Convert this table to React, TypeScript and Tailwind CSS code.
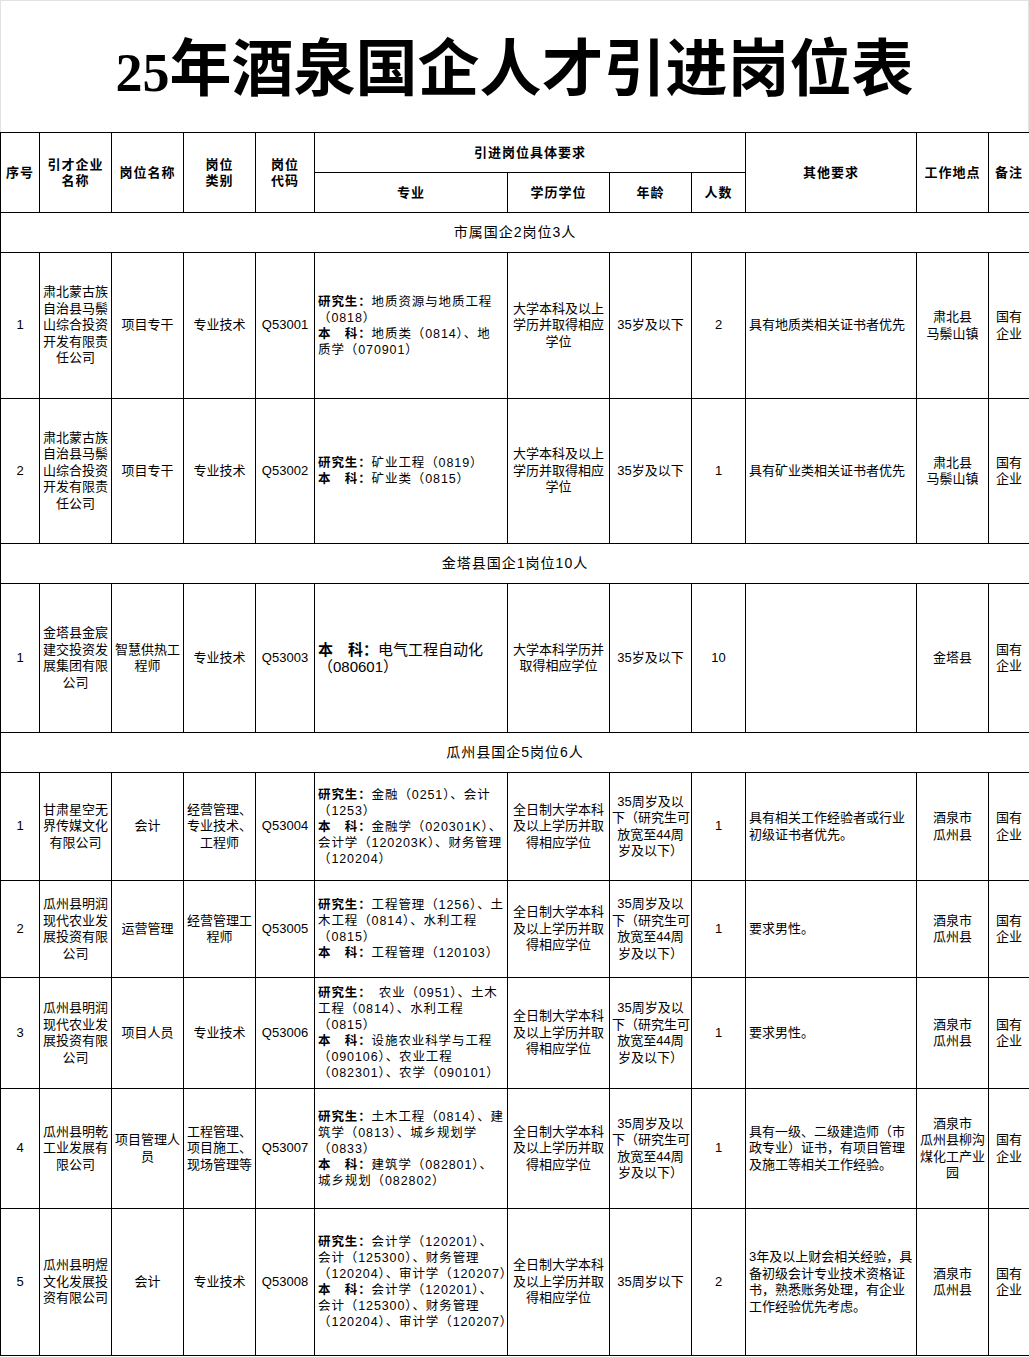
type Major = { b?: string; t: string }

interface Post {
  no: string
  company: string[]
  name: string[]
  kind: string[]
  code: string
  major: Major[]
  big?: boolean
  degree: string[]
  age: string[]
  count: string
  other: string[]
  place: string[]
  note: string[]
  height: string
}

interface Section {
  title: string
  posts: Post[]
}

const GRAD = "研究生："
const UG = "本　科："

const DEGREE_A = ["大学本科及以上", "学历并取得相应", "学位"]
const DEGREE_FULL = ["全日制大学本科", "及以上学历并取", "得相应学位"]
const AGE_44 = ["35周岁及以", "下（研究生可", "放宽至44周", "岁及以下）"]
const SUBEI = ["肃北蒙古族", "自治县马鬃", "山综合投资", "开发有限责", "任公司"]
const MINGRUN = ["瓜州县明润", "现代农业发", "展投资有限", "公司"]
const GUAZHOU = ["酒泉市", "瓜州县"]
const STATE = ["国有", "企业"]

const sections: Section[] = [
  {
    title: "市属国企2岗位3人",
    posts: [
      {
        no: "1",
        company: SUBEI,
        name: ["项目专干"],
        kind: ["专业技术"],
        code: "Q53001",
        major: [
          { b: GRAD, t: "地质资源与地质工程" },
          { t: "（0818）" },
          { b: UG, t: "地质类（0814）、地" },
          { t: "质学（070901）" },
        ],
        degree: DEGREE_A,
        age: ["35岁及以下"],
        count: "2",
        other: ["具有地质类相关证书者优先"],
        place: ["肃北县", "马鬃山镇"],
        note: STATE,
        height: "h-[146px]",
      },
      {
        no: "2",
        company: SUBEI,
        name: ["项目专干"],
        kind: ["专业技术"],
        code: "Q53002",
        major: [
          { b: GRAD, t: "矿业工程（0819）" },
          { b: UG, t: "矿业类（0815）" },
        ],
        degree: DEGREE_A,
        age: ["35岁及以下"],
        count: "1",
        other: ["具有矿业类相关证书者优先"],
        place: ["肃北县", "马鬃山镇"],
        note: STATE,
        height: "h-[145px]",
      },
    ],
  },
  {
    title: "金塔县国企1岗位10人",
    posts: [
      {
        no: "1",
        company: ["金塔县金宸", "建交投资发", "展集团有限", "公司"],
        name: ["智慧供热工", "程师"],
        kind: ["专业技术"],
        code: "Q53003",
        major: [{ b: UG, t: "电气工程自动化" }, { t: "（080601）" }],
        big: true,
        degree: ["大学本科学历并", "取得相应学位"],
        age: ["35岁及以下"],
        count: "10",
        other: [],
        place: ["金塔县"],
        note: STATE,
        height: "h-[149px]",
      },
    ],
  },
  {
    title: "瓜州县国企5岗位6人",
    posts: [
      {
        no: "1",
        company: ["甘肃星空无", "界传媒文化", "有限公司"],
        name: ["会计"],
        kind: ["经营管理、", "专业技术、", "工程师"],
        code: "Q53004",
        major: [
          { b: GRAD, t: "金融（0251）、会计" },
          { t: "（1253）" },
          { b: UG, t: "金融学（020301K）、" },
          { t: "会计学（120203K）、财务管理" },
          { t: "（120204）" },
        ],
        degree: DEGREE_FULL,
        age: AGE_44,
        count: "1",
        other: ["具有相关工作经验者或行业", "初级证书者优先。"],
        place: GUAZHOU,
        note: STATE,
        height: "h-[108px]",
      },
      {
        no: "2",
        company: MINGRUN,
        name: ["运营管理"],
        kind: ["经营管理工", "程师"],
        code: "Q53005",
        major: [
          { b: GRAD, t: "工程管理（1256）、土" },
          { t: "木工程（0814）、水利工程" },
          { t: "（0815）" },
          { b: UG, t: "工程管理（120103）" },
        ],
        degree: DEGREE_FULL,
        age: AGE_44,
        count: "1",
        other: ["要求男性。"],
        place: GUAZHOU,
        note: STATE,
        height: "h-[97px]",
      },
      {
        no: "3",
        company: MINGRUN,
        name: ["项目人员"],
        kind: ["专业技术"],
        code: "Q53006",
        major: [
          { b: GRAD, t: "　农业（0951）、土木" },
          { t: "工程（0814）、水利工程" },
          { t: "（0815）" },
          { b: UG, t: "设施农业科学与工程" },
          { t: "（090106）、农业工程" },
          { t: "（082301）、农学（090101）" },
        ],
        degree: DEGREE_FULL,
        age: AGE_44,
        count: "1",
        other: ["要求男性。"],
        place: GUAZHOU,
        note: STATE,
        height: "h-[111px]",
      },
      {
        no: "4",
        company: ["瓜州县明乾", "工业发展有", "限公司"],
        name: ["项目管理人", "员"],
        kind: ["工程管理、", "项目施工、", "现场管理等"],
        code: "Q53007",
        major: [
          { b: GRAD, t: "土木工程（0814）、建" },
          { t: "筑学（0813）、城乡规划学" },
          { t: "（0833）" },
          { b: UG, t: "建筑学（082801）、" },
          { t: "城乡规划（082802）" },
        ],
        degree: DEGREE_FULL,
        age: AGE_44,
        count: "1",
        other: ["具有一级、二级建造师（市", "政专业）证书，有项目管理", "及施工等相关工作经验。"],
        place: ["酒泉市", "瓜州县柳沟", "煤化工产业", "园"],
        note: STATE,
        height: "h-[120px]",
      },
      {
        no: "5",
        company: ["瓜州县明煜", "文化发展投", "资有限公司"],
        name: ["会计"],
        kind: ["专业技术"],
        code: "Q53008",
        major: [
          { b: GRAD, t: "会计学（120201）、" },
          { t: "会计（125300）、财务管理" },
          { t: "（120204）、审计学（120207）" },
          { b: UG, t: "会计学（120201）、" },
          { t: "会计（125300）、财务管理" },
          { t: "（120204）、审计学（120207）" },
        ],
        degree: DEGREE_FULL,
        age: ["35周岁以下"],
        count: "2",
        other: [
          "3年及以上财会相关经验，具",
          "备初级会计专业技术资格证",
          "书，熟悉账务处理，有企业",
          "工作经验优先考虑。",
        ],
        place: GUAZHOU,
        note: STATE,
        height: "h-[147px]",
      },
    ],
  },
]

const th =
  "border border-black p-0 text-center align-middle text-[13px] font-bold leading-[16px] tracking-[1px]"
const td = "border border-black px-[2px] text-center align-middle text-[13px] leading-[16.5px]"

function Lines({ lines }: { lines: string[] }) {
  return (
    <>
      {lines.map((l, i) => (
        <div key={i} className="whitespace-nowrap">
          {l}
        </div>
      ))}
    </>
  )
}

function PostRow({ p }: { p: Post }) {
  return (
    <tr className={p.height}>
      <td className={td}>{p.no}</td>
      <td className={td}>
        <Lines lines={p.company} />
      </td>
      <td className={td}>
        <Lines lines={p.name} />
      </td>
      <td className={td}>
        <Lines lines={p.kind} />
      </td>
      <td className={td}>{p.code}</td>
      <td
        className={`border border-black pl-[3px] pr-0 text-left align-middle ${
          p.big ? "text-[15px] leading-[17px]" : "text-[12.5px] leading-[16px] tracking-[0.9px]"
        }`}
      >
        {p.major.map((m, i) => (
          <div key={i} className="whitespace-nowrap">
            {m.b && <span className="font-bold">{m.b}</span>}
            {m.t}
          </div>
        ))}
      </td>
      <td className={td}>
        <Lines lines={p.degree} />
      </td>
      <td className={td}>
        <Lines lines={p.age} />
      </td>
      <td className={td}>{p.count}</td>
      <td className="border border-black pl-[3px] text-left align-middle text-[13px] leading-[16.5px]">
        <Lines lines={p.other} />
      </td>
      <td className={td}>
        <Lines lines={p.place} />
      </td>
      <td className={td}>
        <Lines lines={p.note} />
      </td>
    </tr>
  )
}

export default function App() {
  return (
    <div className="w-[1029px] bg-white text-black font-['Liberation_Sans','Noto_Sans_CJK_SC',sans-serif]">
      <div className="flex h-[132px] items-center justify-center border-x border-t border-[#e2e2e2]">
        <h1 className="font-['Noto_Sans_CJK_SC',serif] text-[62px] font-bold leading-none">
          <span className="font-['Liberation_Serif',serif] text-[54px]">25</span>
          年酒泉国企人才引进岗位表
        </h1>
      </div>

      <table className="w-[1029px] table-fixed border-collapse">
        <colgroup>
          <col className="w-[39px]" />
          <col className="w-[72px]" />
          <col className="w-[72px]" />
          <col className="w-[72px]" />
          <col className="w-[59px]" />
          <col className="w-[193px]" />
          <col className="w-[102px]" />
          <col className="w-[82px]" />
          <col className="w-[54px]" />
          <col className="w-[171px]" />
          <col className="w-[72px]" />
          <col className="w-[41px]" />
        </colgroup>
        <thead>
          <tr className="h-[40px]">
            <th rowSpan={2} className={th}>
              序号
            </th>
            <th rowSpan={2} className={th}>
              <div>引才企业</div>
              <div>名称</div>
            </th>
            <th rowSpan={2} className={th}>
              岗位名称
            </th>
            <th rowSpan={2} className={th}>
              <div>岗位</div>
              <div>类别</div>
            </th>
            <th rowSpan={2} className={th}>
              <div>岗位</div>
              <div>代码</div>
            </th>
            <th colSpan={4} className={`${th} tracking-[1.5px]`}>
              引进岗位具体要求
            </th>
            <th rowSpan={2} className={th}>
              其他要求
            </th>
            <th rowSpan={2} className={th}>
              工作地点
            </th>
            <th rowSpan={2} className={th}>
              备注
            </th>
          </tr>
          <tr className="h-[40px]">
            <th className={th}>专业</th>
            <th className={th}>学历学位</th>
            <th className={th}>年龄</th>
            <th className={th}>人数</th>
          </tr>
        </thead>
        <tbody>
          {sections.map((s) => (
            <SectionRows key={s.title} s={s} />
          ))}
        </tbody>
      </table>
    </div>
  )
}

function SectionRows({ s }: { s: Section }) {
  return (
    <>
      <tr className="h-[40px]">
        <td
          colSpan={12}
          className="border border-black text-center align-middle text-[14px] tracking-[1px]"
        >
          {s.title}
        </td>
      </tr>
      {s.posts.map((p) => (
        <PostRow key={p.code} p={p} />
      ))}
    </>
  )
}
